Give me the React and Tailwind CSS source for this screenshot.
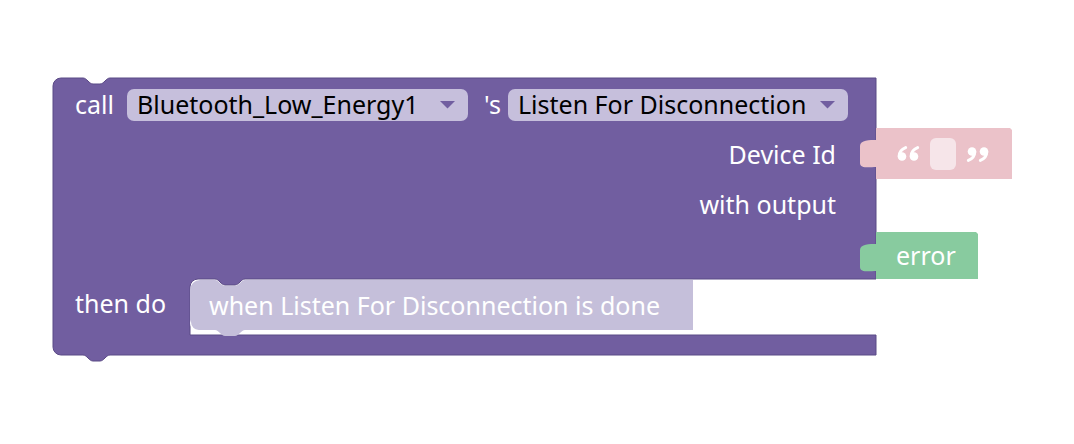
import React from "react";

const PURPLE = "#715ea0";
const PILL = "#c6bfdc";
const INNER = "#c5bfda";
const PINK = "#ebc2c9";
const GREEN = "#88cb9f";

// main C-shaped block outline, coordinates relative to block origin
const mainPath =
  "M0 8 A8 8 0 0 1 8 0 L30 0 C34 0 36 6 40 6 L47 6 C51 6 53 0 57 0 L823 0 L823 201 " +
  "L192 201 C188 201 186 207 182 207 L172 207 C168 207 166 201 162 201 L145 201 A8 8 0 0 0 137 209 " +
  "L137 257 L823 257 L823 277 L57 277 C53 277 51 283 47 283 L40 283 C36 283 34 277 30 277 L8 277 A8 8 0 0 1 0 269 Z";

function Pill({ width, children }) {
  return (
    <div
      className="flex items-center justify-between h-[32px] rounded-[7px] pl-[10px] pr-[12px] shrink-0"
      style={{ background: PILL, width }}
    >
      <span className="text-black text-[25px] leading-none whitespace-nowrap">{children}</span>
      <svg width="17" height="9" viewBox="0 0 17 9">
        <path d="M1 1 L16 1 L8.5 8.5 Z" fill={PURPLE} />
      </svg>
    </div>
  );
}

// quote images of the text block ("66" / "99" marks)
function Quote({ close }) {
  const mark = (x) => (
    <g key={x} transform={`translate(${x} 0)`}>
      <circle cx="5" cy="10.5" r="4.3" fill="#fff" />
      <path d="M2.2 10 Q2.4 4 8.6 1.6" stroke="#fff" strokeWidth="3" fill="none" strokeLinecap="round" />
    </g>
  );
  return (
    <svg width="23" height="16" viewBox="0 0 23 16" style={close ? { transform: "rotate(180deg)" } : undefined}>
      {mark(0)}
      {mark(12)}
    </svg>
  );
}

function Reporter({ left, top, width, height, color, children }) {
  return (
    <div className="absolute" style={{ left, top, width, height }}>
      <svg className="absolute left-0 top-0 overflow-visible" width={width} height={height}>
        <path
          d={`M16 0 L${width - 2} 0 L${width} 2 L${width} ${height} L16 ${height} ` + "L16 39 C10 39 0 41 0 35 L0 18 C0 12 10 12 16 12 Z"}
          fill={color}
        />
      </svg>
      <div className="relative h-full flex items-center pl-[16px]">{children}</div>
    </div>
  );
}

export default function App() {
  return (
    <div
      className="relative w-[1074px] h-[444px] bg-white overflow-hidden"
      style={{ fontFamily: '"Noto Sans", "Open Sans", sans-serif' }}
    >
      {/* main procedure-call block */}
      <div className="absolute left-[53px] top-[78px] w-[823px] h-[277px] text-white">
        <svg className="absolute left-0 top-0 overflow-visible" width="823" height="284">
          <path d={mainPath} fill={PURPLE} stroke="#5b4a86" strokeWidth="1" />
        </svg>
        <div className="relative flex flex-col text-[25px]">
          <div className="h-[53px] flex items-center pl-[22px]">
            <span className="w-[52px]">call</span>
            <Pill width={341}>Bluetooth_Low_Energy1</Pill>
            <span className="pl-[16px] w-[40px]">'s</span>
            <Pill width={340}>Listen For Disconnection</Pill>
          </div>
          <div className="h-[48px] flex items-center justify-end pr-[40px]">Device Id</div>
          <div className="h-[52px] flex items-center justify-end pr-[40px]">with output</div>
          <div className="h-[48px]" />
          <div className="h-[50px] flex items-center pl-[22px]">then do</div>
        </div>
      </div>

      {/* inner statement block */}
      <div className="absolute left-[190px] top-[280px] w-[503px] h-[52px]">
        <svg className="absolute left-0 top-0 overflow-visible" width="503" height="58">
          <path
            d="M0 10 A10 10 0 0 1 10 0 L25 0 C29 0 31 6 35 6 L45 6 C49 6 51 0 55 0 L503 0 L503 50 L55 50 C51 50 49 56 45 56 L35 56 C31 56 29 50 25 50 L8 50 A8 8 0 0 1 0 42 Z"
            fill={INNER}
          />
          <path d="M1 40 L1 42 A8 8 0 0 0 9 50 L25 50 L25 52 L9 52 A9 9 0 0 1 0 43 Z" fill="#ffffff" />
        </svg>
        <div className="relative h-full flex items-center pl-[19px] text-white text-[25px] whitespace-nowrap">
          when Listen For Disconnection is done
        </div>
      </div>

      {/* text reporter */}
      <Reporter left={860} top={128} width={152} height={51} color={PINK}>
        <div className="flex items-center pl-[21px] gap-[10px]">
          <Quote />
          <div className="w-[26px] h-[32px] rounded-[6px]" style={{ background: "#f6e5e9" }} />
          <Quote close />
        </div>
      </Reporter>

      {/* error reporter */}
      <Reporter left={860} top={232} width={118} height={47} color={GREEN}>
        <span className="text-white text-[25px] pl-[20px]">error</span>
      </Reporter>
    </div>
  );
}
